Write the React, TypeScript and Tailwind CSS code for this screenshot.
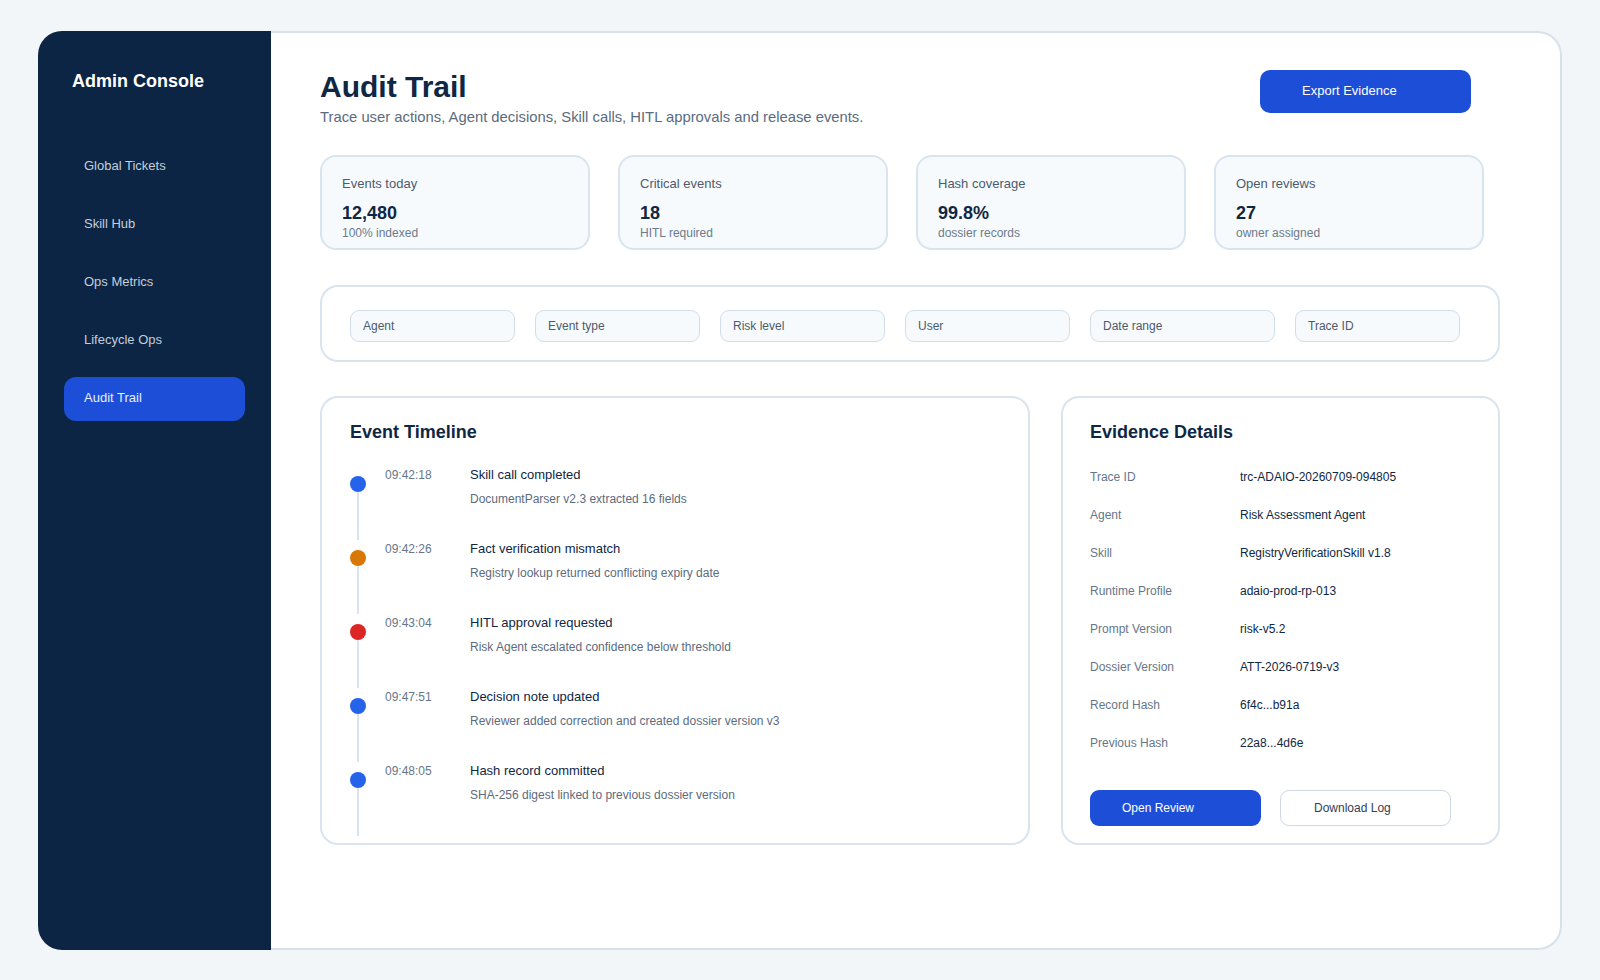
const navItems = ["Global Tickets", "Skill Hub", "Ops Metrics", "Lifecycle Ops", "Audit Trail"];

const stats = [
  { label: "Events today", value: "12,480", sub: "100% indexed" },
  { label: "Critical events", value: "18", sub: "HITL required" },
  { label: "Hash coverage", value: "99.8%", sub: "dossier records" },
  { label: "Open reviews", value: "27", sub: "owner assigned" },
];

const filters = [
  { label: "Agent", w: "w-[165px]" },
  { label: "Event type", w: "w-[165px]" },
  { label: "Risk level", w: "w-[165px]" },
  { label: "User", w: "w-[165px]" },
  { label: "Date range", w: "w-[185px]" },
  { label: "Trace ID", w: "w-[165px]" },
];

const events = [
  { time: "09:42:18", title: "Skill call completed", desc: "DocumentParser v2.3 extracted 16 fields", dot: "bg-[#2563eb]" },
  { time: "09:42:26", title: "Fact verification mismatch", desc: "Registry lookup returned conflicting expiry date", dot: "bg-[#d97706]" },
  { time: "09:43:04", title: "HITL approval requested", desc: "Risk Agent escalated confidence below threshold", dot: "bg-[#dc2626]" },
  { time: "09:47:51", title: "Decision note updated", desc: "Reviewer added correction and created dossier version v3", dot: "bg-[#2563eb]" },
  { time: "09:48:05", title: "Hash record committed", desc: "SHA-256 digest linked to previous dossier version", dot: "bg-[#2563eb]" },
];

const details = [
  ["Trace ID", "trc-ADAIO-20260709-094805"],
  ["Agent", "Risk Assessment Agent"],
  ["Skill", "RegistryVerificationSkill v1.8"],
  ["Runtime Profile", "adaio-prod-rp-013"],
  ["Prompt Version", "risk-v5.2"],
  ["Dossier Version", "ATT-2026-0719-v3"],
  ["Record Hash", "6f4c...b91a"],
  ["Previous Hash", "22a8...4d6e"],
];

function Sidebar() {
  return (
    <aside className="w-[233px] shrink-0 rounded-l-[24px] bg-[#0c2544] px-[26px] pt-[38px]">
      <div className="pl-[8px] text-[18px] font-bold leading-[24px] text-white">Admin Console</div>
      <nav className="mt-[51px] flex flex-col gap-[14px]">
        {navItems.map((item) => {
          const active = item === "Audit Trail";
          return (
            <div
              key={item}
              className={
                active
                  ? "mt-[1px] flex h-[44px] items-center rounded-[12px] bg-[#1d4ed8] px-[20px] pb-[3px] text-[13px] text-[#e8eefb]"
                  : "flex h-[44px] items-center px-[20px] text-[13px] text-[#c3cedb]"
              }
            >
              {item}
            </div>
          );
        })}
      </nav>
    </aside>
  );
}

function StatCard({ label, value, sub }: { label: string; value: string; sub: string }) {
  return (
    <div className="h-[95px] rounded-[16px] border-2 border-[#d9e4ef] bg-[#f7fafc] px-[20px] pt-[19px]">
      <div className="text-[13px] leading-[16px] text-[#4b5a6d]">{label}</div>
      <div className="mt-[10px] text-[18px] font-bold leading-[22px] text-[#0f2744]">{value}</div>
      <div className="mt-[1px] text-[12px] leading-[16px] text-[#6b7a8d]">{sub}</div>
    </div>
  );
}

function Timeline() {
  return (
    <section className="h-[449px] w-[710px] shrink-0 rounded-[18px] border-2 border-[#d9e4ef] bg-white px-[28px] pt-[22px]">
      <h2 className="text-[18px] font-bold leading-[24px] text-[#0f2744]">Event Timeline</h2>
      <div className="mt-[22px]">
        {events.map((e) => (
          <div key={e.time} className="flex h-[74px]">
            <div className="flex w-[16px] flex-col items-center">
              <div className={`mt-[10px] size-[16px] rounded-full ${e.dot}`} />
              <div className="h-[48px] w-[2px] bg-[#d9e4f0]" />
            </div>
            <div className="ml-[19px] w-[85px] text-[12px] leading-[18px] text-[#66768a]">{e.time}</div>
            <div>
              <div className="text-[13px] leading-[18px] text-[#0f2744]">{e.title}</div>
              <div className="mt-[7px] text-[12px] leading-[16px] text-[#5c6b7e]">{e.desc}</div>
            </div>
          </div>
        ))}
      </div>
    </section>
  );
}

function Evidence() {
  return (
    <section className="h-[449px] flex-1 rounded-[18px] border-2 border-[#d9e4ef] bg-white pl-[27px] pt-[22px]">
      <h2 className="text-[18px] font-bold leading-[24px] text-[#0f2744]">Evidence Details</h2>
      <div className="mt-[14px]">
        {details.map(([k, v]) => (
          <div key={k} className="flex h-[38px] items-center text-[12px]">
            <div className="w-[150px] text-[#66768a]">{k}</div>
            <div className="text-[#0f2744]">{v}</div>
          </div>
        ))}
      </div>
      <div className="mt-[28px] flex gap-[19px]">
        <button className="h-[36px] w-[171px] rounded-[9px] bg-[#1d4ed8] pl-[32px] text-left text-[12px] text-white">
          Open Review
        </button>
        <button className="h-[36px] w-[171px] rounded-[9px] border border-[#cfd8e3] bg-white pl-[33px] text-left text-[12px] text-[#334155]">
          Download Log
        </button>
      </div>
    </section>
  );
}

export default function App() {
  return (
    <div className="min-h-screen bg-[#f3f6f9] px-[38px] py-[31px] font-['Liberation_Sans',Arial,sans-serif]">
      <div className="flex h-[919px]">
        <Sidebar />
        <main className="flex-1 rounded-r-[24px] border-2 border-l-0 border-[#d8e1eb] bg-white pl-[49px] pt-[36px]">
          <div className="w-[1180px]">
            <header className="flex items-start">
              <div>
                <h1 className="text-[30px] font-bold leading-[36px] text-[#0f2744]">Audit Trail</h1>
                <p className="mt-[2px] text-[14.8px] leading-[20px] text-[#5a6b80]">
                  Trace user actions, Agent decisions, Skill calls, HITL approvals and release events.
                </p>
              </div>
              <button className="ml-auto mr-[29px] mt-[1px] h-[43px] w-[211px] rounded-[10px] bg-[#1d4ed8] pb-[2px] pl-[42px] text-left text-[13px] text-white">
                Export Evidence
              </button>
            </header>

            <div className="mt-[28px] grid grid-cols-[repeat(4,270px)] gap-[28px]">
              {stats.map((s) => (
                <StatCard key={s.label} {...s} />
              ))}
            </div>

            <div className="mt-[35px] flex h-[77px] gap-[20px] rounded-[18px] border-2 border-[#d9e4ef] bg-white pl-[28px] pt-[23px]">
              {filters.map((f) => (
                <div
                  key={f.label}
                  className={`${f.w} flex h-[32px] items-center rounded-[9px] border border-[#d3dde8] bg-[#f7fafc] px-[12px] text-[12px] text-[#4b5a6d]`}
                >
                  {f.label}
                </div>
              ))}
            </div>

            <div className="mt-[34px] flex gap-[31px]">
              <Timeline />
              <Evidence />
            </div>
          </div>
        </main>
      </div>
    </div>
  );
}
